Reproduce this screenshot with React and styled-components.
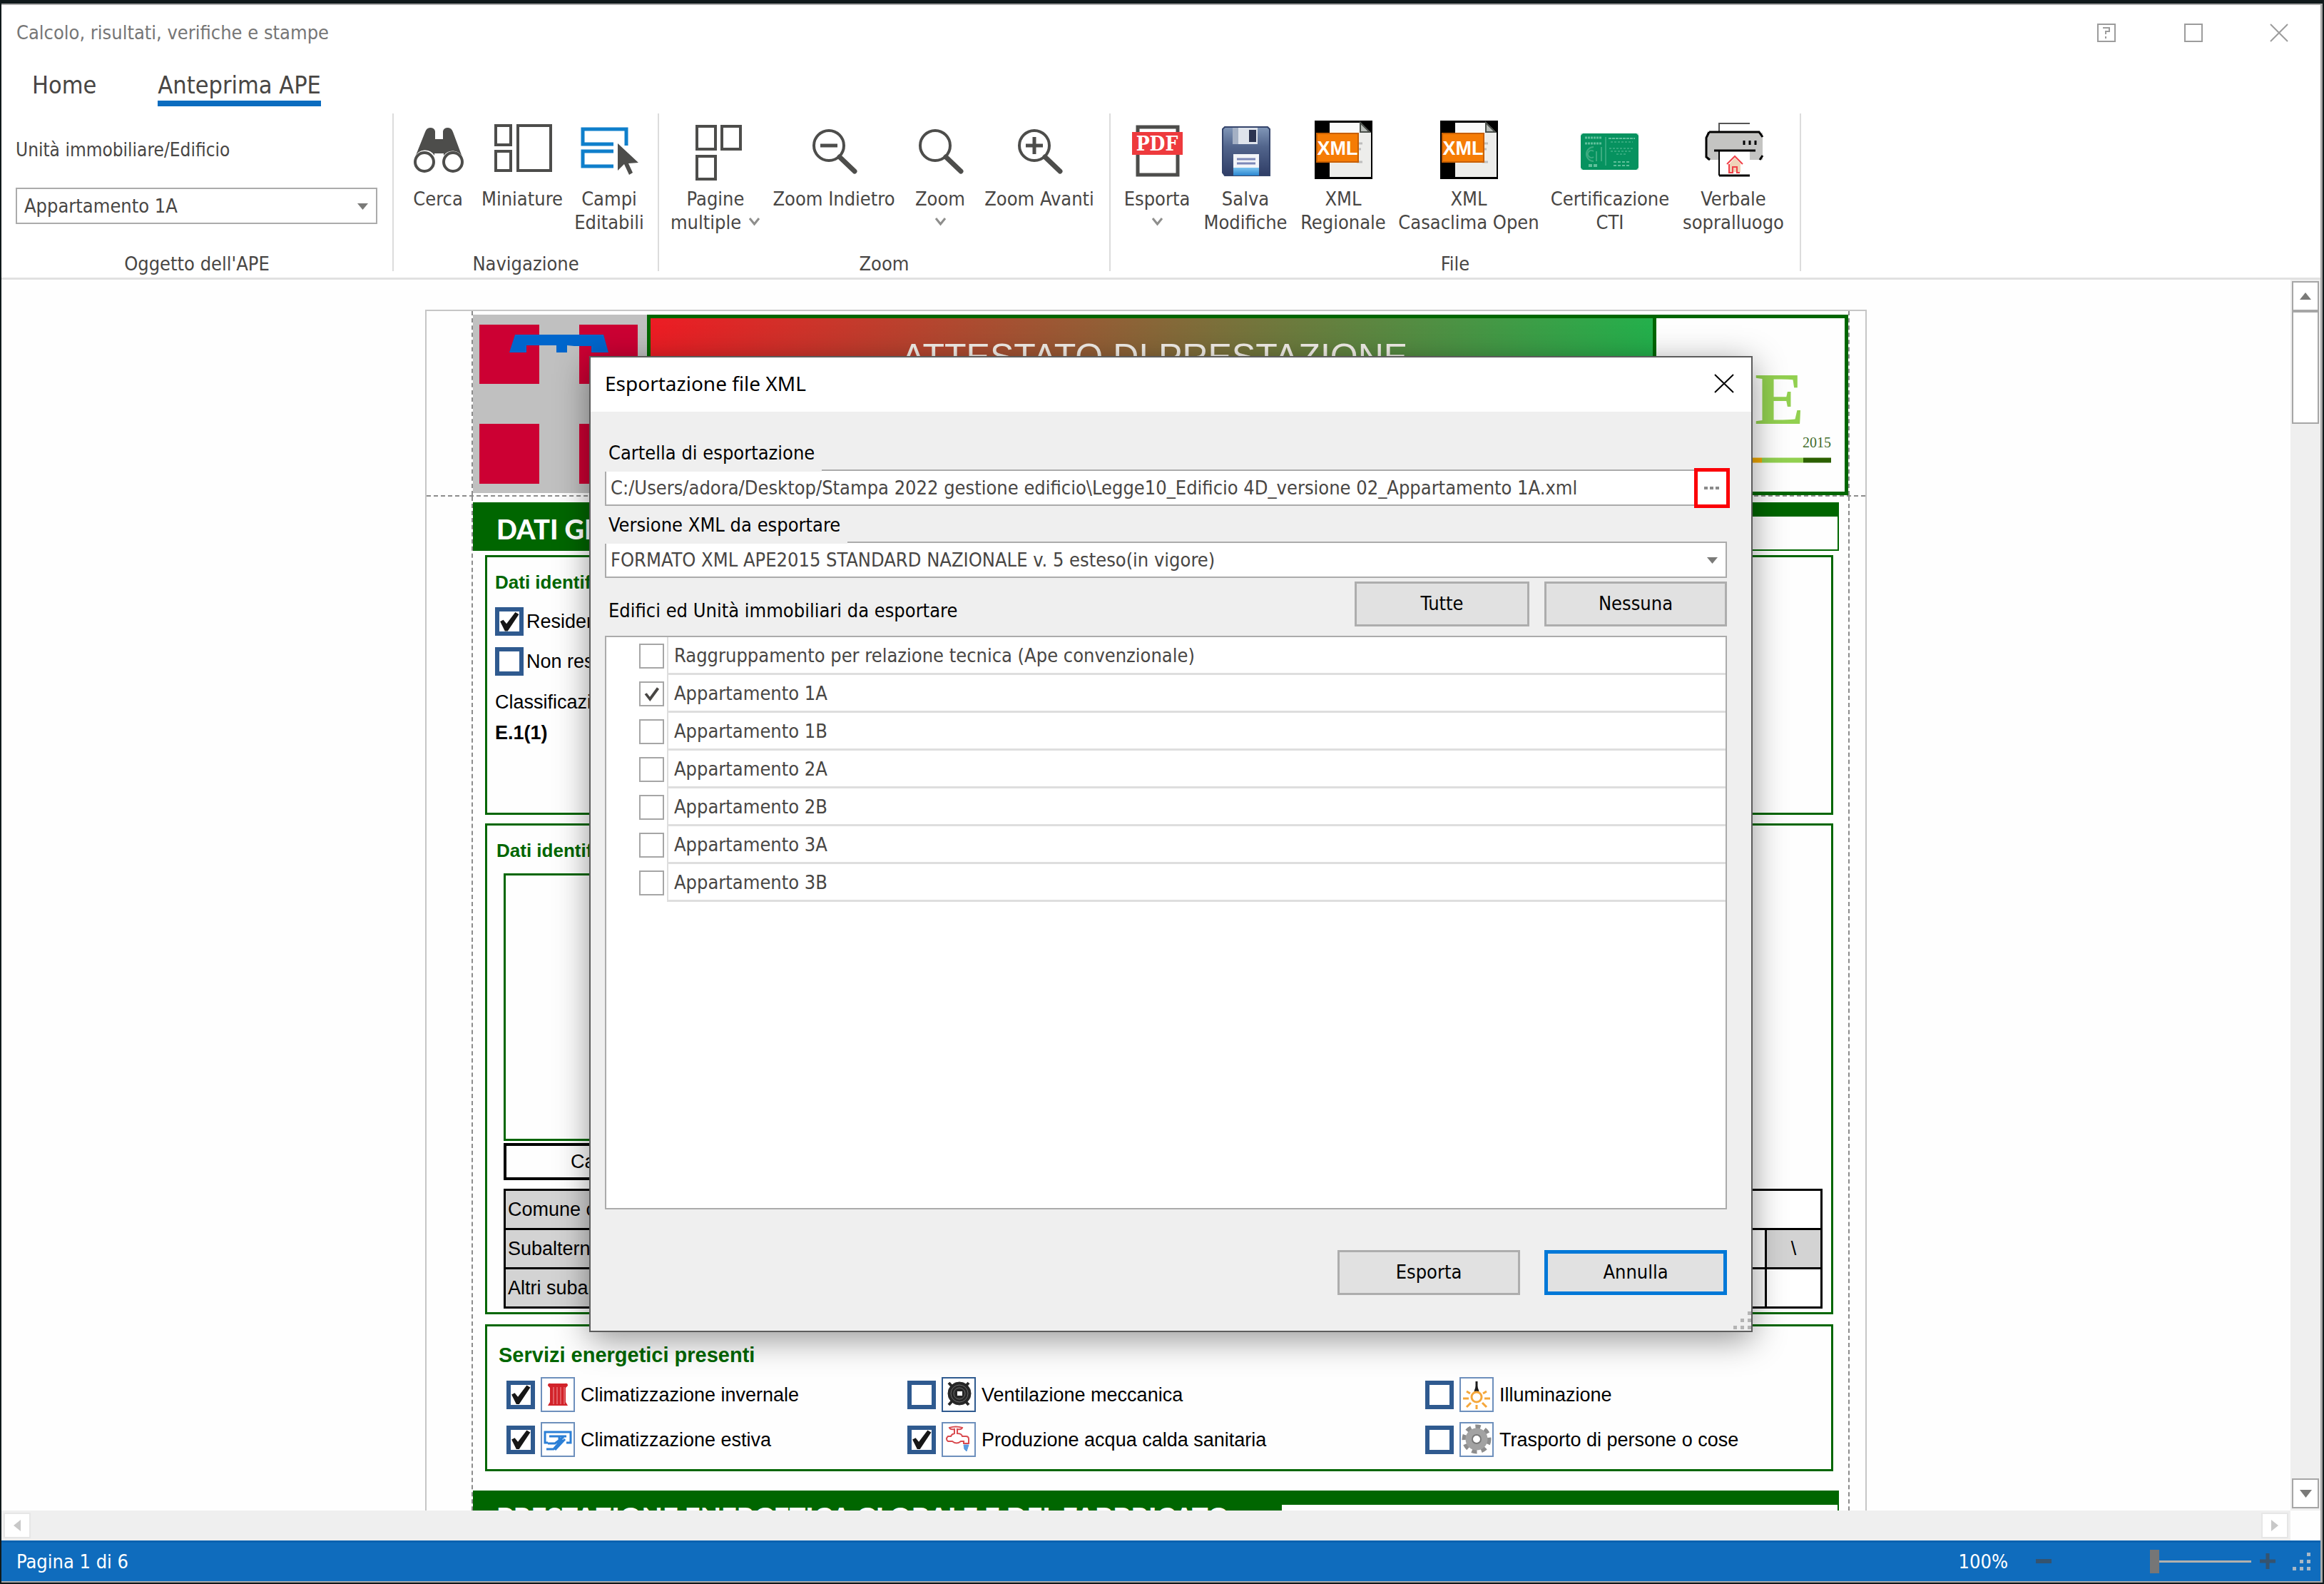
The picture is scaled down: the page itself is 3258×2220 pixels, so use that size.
import React, { useState } from "react";
import styled, { createGlobalStyle } from "styled-components";

const UI = `"DejaVu Sans Condensed", "Noto Sans", sans-serif`;
const DOC = `"Liberation Sans", Arial, sans-serif`;
const GREEN = "#006600";
const INK = "#484644";

const GlobalStyle = createGlobalStyle`
  *, *::before, *::after { box-sizing: border-box; }
  body { margin: 0; background: #fff; }
  button, input, select { font: inherit; color: inherit; margin: 0; }
`;

/* ---------- window ---------- */

const Frame = styled.div`
  position: relative;
  height: 100vh;
  display: flex;
  flex-direction: column;
  border: solid #10191b;
  border-width: 5px 2px 2px 2px;
  padding: 2px 3px 2px 0;
  background: #a9a9a9;
  font-family: ${UI};
  font-size: 27px;
  line-height: 33px;
  color: ${INK};
  overflow: hidden;
`;

const TitleBar = styled.header`
  flex: none;
  height: 77px;
  display: flex;
  align-items: center;
  justify-content: space-between;
  padding-left: 21px;
  background: #fff;
  color: #767676;
`;

const WindowButtons = styled.div`
  display: flex;
  height: 100%;
`;

const WindowButton = styled.button`
  width: 122px;
  height: 100%;
  border: 0;
  padding: 0;
  background: none;
  display: grid;
  place-items: center;
  &:last-child { width: 117px; }
`;

const Tabs = styled.nav`
  flex: none;
  height: 75px;
  display: flex;
  gap: 86px;
  padding: 15px 0 0 43px;
  background: #fff;
`;

const Tab = styled.a`
  height: 50px;
  line-height: 40px;
  font-size: 34px;
  color: ${INK};
  text-decoration: none;
  border-bottom: 8px solid ${(p) => (p.$active ? "#0b6cbf" : "transparent")};
`;

/* ---------- ribbon ---------- */

const Ribbon = styled.section`
  flex: none;
  display: flex;
  align-items: flex-start;
  height: 233px;
  background: #fff;
  border-bottom: 3px solid #e1e1e1;
`;

const Separator = styled.div`
  flex: none;
  width: 2px;
  height: 221px;
  background: #dcdcdc;
`;

const Group = styled.div`
  flex: none;
  display: grid;
  grid-template-rows: 1fr 33px;
  height: 227px;
`;

const GroupLabel = styled.div`
  text-align: center;
`;

const Tools = styled.div`
  display: grid;
  grid-template-columns: ${(p) => p.$columns};
  align-items: start;
  padding: 9px ${(p) => p.$right}px 0 ${(p) => p.$left}px;
`;

const Tool = styled.button`
  border: 0;
  padding: 0;
  background: none;
  display: flex;
  flex-direction: column;
  align-items: center;
  line-height: 33px;
  white-space: nowrap;
  svg { display: block; }
`;

const ToolLine = styled.span`
  display: flex;
  align-items: center;
  gap: 10px;
  height: 33px;
  &:first-of-type { margin-top: 4px; }
`;

const UnitPicker = styled.div`
  display: flex;
  flex-direction: column;
  padding: 35px 21px 0 20px;
`;

const SelectShell = styled.div`
  position: relative;
  svg {
    position: absolute;
    right: 13px;
    top: 50%;
    margin-top: -4px;
    pointer-events: none;
  }
`;

const Select = styled.select`
  display: block;
  width: ${(p) => p.$width || "100%"};
  height: 51px;
  padding: 0 ${(p) => p.$inset || 6}px;
  border: 2px solid #ababab;
  border-radius: 0;
  background: #fff;
  color: ${INK};
  appearance: none;
`;

const PickerLabel = styled.label`
  margin-bottom: 36px;
  font-size: 26px;
`;

/* ---------- workspace ---------- */

const Workspace = styled.main`
  flex: 1;
  min-height: 0;
  display: grid;
  grid-template-columns: 1fr 42px;
  grid-template-rows: minmax(0, 1fr) 42px;
  background: #fefefe;
`;

const Canvas = styled.div`
  overflow: hidden;
  padding-top: 42px;
`;

const VScroll = styled.div`
  display: flex;
  flex-direction: column;
  padding: 2px 2px 3px;
  background: #efefef;
`;

const HScroll = styled.div`
  display: flex;
  justify-content: space-between;
  padding: 3px 3px;
  background: #efefef;
`;

const ScrollButton = styled.button`
  width: 38px;
  height: ${(p) => (p.$dim ? 36 : 42)}px;
  padding: 0;
  display: grid;
  place-items: center;
  background: #fff;
  border: 2px solid ${(p) => (p.$dim ? "#e6e6e6" : "#a6a6a6")};
`;

const Thumb = styled.div`
  height: 158px;
  background: #fff;
  border: 2px solid #a6a6a6;
`;

const Spring = styled.div`
  flex: 1;
`;

const StatusBar = styled.footer`
  flex: none;
  height: 57px;
  display: flex;
  align-items: center;
  padding: 0 14px 2px 21px;
  background: #0f6cbd;
  border-top: 3px solid #0a62b0;
  color: #fff;
`;

const ZoomControls = styled.div`
  margin-left: auto;
  display: flex;
  align-items: center;
`;

const ZoomButton = styled.button`
  border: 0;
  padding: 0;
  width: ${(p) => p.$width}px;
  height: 40px;
  background: none;
  display: grid;
  place-items: center ${(p) => p.$justify || "center"};
`;

const ZoomRange = styled.input`
  appearance: none;
  width: 142px;
  height: 34px;
  margin: 0 12px 0 99px;
  background: linear-gradient(#b3b0ad, #b3b0ad) center / 100% 3px no-repeat;
  &::-webkit-slider-thumb {
    appearance: none;
    width: 13px;
    height: 33px;
    background: #767676;
  }
`;

/* ---------- printed page ---------- */

const Page = styled.article`
  width: 2021px;
  margin: 0 auto;
  border: 2px solid #c6c6c6;
  border-bottom: 0;
  background: #fefefe;
  font-family: ${DOC};
  line-height: 32px;
  color: #000;
`;

const PageBand = styled.div`
  padding: 0 22px 0 63px;
  border-bottom: ${(p) => (p.$rule ? "2px dashed #8c8c8c" : "0")};
`;

const Margins = styled.div`
  border: dashed #8c8c8c;
  border-width: 0 2px;
  padding-top: ${(p) => p.$top}px;
`;

const Header = styled.header`
  display: flex;
  height: 253px;
`;

const RegionLogo = styled.div`
  flex: none;
  width: 244px;
  height: 250px;
  background: #c0c0c0;
  svg { display: block; }
`;

const Banner = styled.div`
  flex: 1;
  display: flex;
  border: 5px solid ${GREEN};
`;

const BannerTitle = styled.h1`
  flex: 1;
  margin: 0;
  padding: 26px 0 0 8px;
  text-align: center;
  font-size: 50px;
  line-height: 56px;
  font-weight: 400;
  color: #f4f0ea;
  background: linear-gradient(100deg, #ed1c24, #22b14c 98%);
`;

const ApeMark = styled.div`
  width: 269px;
  border-left: 5px solid ${GREEN};
  svg { display: block; }
`;

const Bar = styled.div`
  display: flex;
  height: 68px;
  margin: ${(p) => p.$top}px 13px 0 0;
`;

const BarTitle = styled.h2`
  flex: none;
  width: ${(p) => p.$width}px;
  margin: 0;
  padding-left: 33px;
  background: ${GREEN};
  color: #fff;
  font-family: Lato, sans-serif;
  font-weight: 900;
  font-size: 38px;
  line-height: 74px;
`;

const BarRest = styled.div`
  flex: 1;
  border: solid ${GREEN};
  border-width: 20px 2px 2px 0;
`;

const Box = styled.section`
  margin: ${(p) => p.$top}px 21px 0 17px;
  height: ${(p) => p.$height}px;
  padding: ${(p) => p.$pad}px 12px 0 ${(p) => p.$left}px;
  border: 3px solid ${GREEN};
`;

const BoxTitle = styled.h3`
  margin: 0 0 ${(p) => p.$gap}px;
  font-size: ${(p) => p.$size || 26}px;
  line-height: 32px;
  color: ${GREEN};
`;

const Check = styled.input`
  appearance: none;
  flex: none;
  width: 40px;
  height: 40px;
  border: 6px solid #2f5a8f;
  background: #fff;
  &:checked::before {
    content: "";
    display: block;
    height: 28px;
    background: #161616;
    clip-path: polygon(4% 50%, 20% 42%, 36% 62%, 80% 4%, 98% 14%, 42% 98%, 28% 98%);
  }
`;

const DocChoice = styled.label`
  display: flex;
  align-items: center;
  gap: 4px;
  height: 40px;
  margin-bottom: 16px;
`;

const DocLine = styled.p`
  margin: ${(p) => p.$top}px 0 0;
  font-weight: ${(p) => (p.$bold ? 700 : 400)};
`;

const PlanBox = styled.div`
  width: 1100px;
  height: 375px;
  margin-left: 10px;
  border: 3px solid ${GREEN};
`;

const Cadastre = styled.div`
  width: 1100px;
  height: 52px;
  margin: 3px 0 12px 10px;
  padding: 6px 0 0 90px;
  border: 4px solid #000;
`;

const Parcels = styled.table`
  width: 1849px;
  margin-left: 10px;
  border-collapse: collapse;
  table-layout: fixed;
`;

const Column = styled.col`
  width: ${(p) => (p.$width ? p.$width + "px" : "auto")};
`;

const Cell = styled.td`
  height: 55px;
  padding: 0 3px;
  border: 3px solid #000;
  text-align: ${(p) => (p.$center ? "center" : "left")};
  font-weight: 400;
  background: ${(p) => (p.$shaded ? "#d3d3d3" : "#fff")};
`;

const Services = styled.div`
  display: grid;
  grid-template-columns: 562px 726px 1fr;
  row-gap: 14px;
  margin-left: 11px;
`;

const Service = styled.label`
  display: flex;
  align-items: center;
  gap: 8px;
  height: 49px;
  svg { display: block; flex: none; }
`;

/* ---------- export dialog ---------- */

const Dialog = styled.section`
  position: absolute;
  left: 824px;
  top: 494px;
  width: 1631px;
  border: 2px solid #5c5c5c;
  background: #efefef;
  color: #000;
  box-shadow: 0 10px 44px rgba(0, 0, 0, 0.42);
`;

const DialogTitle = styled.header`
  height: 76px;
  display: flex;
  align-items: center;
  justify-content: space-between;
  padding-left: 20px;
  background: #fff;
`;

const DialogHeading = styled.h2`
  margin: 0;
  padding-bottom: 3px;
  font-family: "Noto Sans", sans-serif;
  font-size: 28px;
  font-weight: 400;
`;

const CloseButton = styled.button`
  width: 76px;
  height: 76px;
  border: 0;
  padding: 0 0 4px;
  background: none;
  display: grid;
  place-items: center;
`;

const Form = styled.form`
  display: flex;
  flex-direction: column;
  padding: 41px 34px 50px 20px;
`;

const Field = styled.div`
  display: flex;
  flex-direction: column;
  margin-bottom: 10px;
`;

const FieldLabel = styled.label`
  z-index: 1;
  align-self: flex-start;
  margin-bottom: -3px;
  padding: 0 10px 10px 5px;
  background: #efefef;
`;

const PathBox = styled.div`
  position: relative;
`;

const PathInput = styled.input`
  display: block;
  width: 100%;
  height: 51px;
  padding: 0 50px 0 6px;
  border: 2px solid #ababab;
  background: #fff;
  color: ${INK};
`;

const BrowseButton = styled.button`
  position: absolute;
  right: -4px;
  top: -2px;
  width: 50px;
  height: 56px;
  padding: 0;
  border: 5px solid #fb0007;
  background: #fff;
  display: grid;
  place-items: center;
`;

const Row = styled.div`
  display: flex;
  align-items: flex-end;
  gap: ${(p) => p.$gap}px;
  margin-top: ${(p) => p.$top}px;
`;

const ListCaption = styled.span`
  margin-right: auto;
  padding: 0 0 6px 5px;
`;

const PushButton = styled.button`
  width: ${(p) => p.$width}px;
  height: 63px;
  padding: 0 0 2px;
  color: #000;
  background: #e1e1e1;
  border: ${(p) => (p.$focus ? "5px solid #0078d7" : "3px solid #adadad")};
`;

const List = styled.ul`
  list-style: none;
  height: 804px;
  margin: 13px 0 0;
  padding: 0;
  border: 2px solid #ababab;
  background: #fff;
`;

const ListItem = styled.li`
  display: flex;
  align-items: center;
  height: 53px;
  padding-left: 46px;
  color: ${INK};
`;

const ItemLabel = styled.label`
  flex: 1;
  height: 53px;
  margin-left: 4px;
  padding: 9px 0 0 8px;
  border: solid #dedede;
  border-width: 0 0 3px 2px;
`;

const ListCheck = styled.input`
  appearance: none;
  flex: none;
  width: 35px;
  height: 35px;
  border: 2px solid #a6a6a6;
  background: #fff;
  &:checked::before {
    content: "";
    display: block;
    height: 31px;
    background: #484644;
    clip-path: polygon(18% 52%, 28% 46%, 42% 64%, 74% 20%, 84% 28%, 43% 84%);
  }
`;

const Grip = styled.svg`
  position: absolute;
  right: 0;
  bottom: 2px;
`;

/* ---------- drawings ---------- */

const DARK = "#4d4d4b";

const Arrow = ({ dir = "down", w = 16, h = 10, fill = "#7a7a78" }) => {
  const d = {
    down: `M0 0H${w}L${w / 2} ${h}Z`,
    up: `M0 ${h}H${w}L${w / 2} 0Z`,
    left: `M${w} 0V${h}L0 ${h / 2}Z`,
    right: `M0 0V${h}L${w} ${h / 2}Z`,
  }[dir];
  return (
    <svg width={w} height={h} viewBox={`0 0 ${w} ${h}`} aria-hidden="true">
      <path d={d} fill={fill} />
    </svg>
  );
};

const Chevron = () => (
  <svg width="17" height="13" viewBox="0 0 17 13" aria-hidden="true">
    <path d="M2 1L8.500 9L15 1" fill="none" stroke="#8e8e8c" strokeWidth="3" />
  </svg>
);

const Dots = ({ fill }) => (
  <>
    {[[20, 0], [10, 10], [20, 10], [0, 20], [10, 20], [20, 20]].map(([x, y]) => (
      <rect key={`${x}-${y}`} x={x} y={y} width="5" height="5" fill={fill} />
    ))}
  </>
);

const Icon = ({ children }) => (
  <svg width="90" height="90" viewBox="0 0 90 90" aria-hidden="true">{children}</svg>
);

const Binoculars = () => (
  <Icon>
    <path d="M27 17q2-6 7-6q6 0 7 5V27H52V16q1-5 7-5q5 0 7 6L79 52A15 15 0 0 0 53 50V47H40V50A15 15 0 0 0 13 52Z" fill={DARK} />
    <circle cx="26" cy="59" r="13" fill="#fff" stroke={DARK} strokeWidth="4" />
    <circle cx="66" cy="59" r="13" fill="#fff" stroke={DARK} strokeWidth="4" />
  </Icon>
);

const Thumbnails = () => (
  <Icon>
    <g fill="none" stroke={DARK} strokeWidth="4">
      <rect x="8" y="8" width="21" height="27" />
      <rect x="8" y="44" width="21" height="27" />
      <rect x="39" y="8" width="46" height="63" />
    </g>
  </Icon>
);

const EditFields = () => (
  <Icon>
    <path d="M51 34H8V13H69V36M51 44H8V65H51" fill="none" stroke="#0f7fcb" strokeWidth="5" />
    <path d="M57 33V71L66 62L73 77L78 74L72 61L86 60Z" fill={DARK} />
  </Icon>
);

const Pages = () => (
  <Icon>
    <g fill="none" stroke={DARK} strokeWidth="4">
      <rect x="19" y="9" width="26" height="32" />
      <rect x="54" y="9" width="26" height="32" />
      <rect x="19" y="51" width="26" height="32" />
    </g>
  </Icon>
);

const Lens = ({ minus, plus }) => (
  <Icon>
    <circle cx="38" cy="36" r="21" fill="none" stroke={DARK} strokeWidth="4" />
    <path d="M53 52L74 72" stroke={DARK} strokeWidth="7" strokeLinecap="round" />
    {(minus || plus) && <path d="M26 36H50" stroke={DARK} strokeWidth="5" />}
    {plus && <path d="M38 24V48" stroke={DARK} strokeWidth="5" />}
  </Icon>
);

const Pdf = () => (
  <Icon>
    <rect x="18" y="10" width="56" height="67" fill="#fff" stroke={DARK} strokeWidth="5" />
    <rect x="10" y="17" width="71" height="32" fill="#ee3a3d" />
    <text x="45" y="43" textAnchor="middle" fontFamily="DejaVu Serif Condensed, serif" fontWeight="700" fontSize="28" fill="#fff">PDF</text>
  </Icon>
);

const Floppy = () => (
  <Icon>
    <defs>
      <linearGradient id="flp" x1="0" y1="0" x2="0" y2="1">
        <stop offset="0" stopColor="#8197b8" />
        <stop offset=".4" stopColor="#52658c" />
        <stop offset="1" stopColor="#2f3d66" />
      </linearGradient>
      <linearGradient id="flpTag" x1="0" y1="0" x2="0" y2="1">
        <stop offset="0" stopColor="#7cc4f0" />
        <stop offset="1" stopColor="#2a86d0" />
      </linearGradient>
    </defs>
    <path d="M16 10H76L79 13V78H16L13 74V13Z" fill="url(#flp)" stroke="#34446b" strokeWidth="2" />
    <rect x="27" y="11" width="35" height="23" fill="#dfe4ec" />
    <rect x="27" y="11" width="8" height="23" fill="#a4b0c4" />
    <rect x="50" y="14" width="10" height="17" fill="#2c3450" />
    <rect x="28" y="48" width="36" height="30" fill="#f3f5f9" />
    <path d="M33 55H59M33 61H59" stroke="#7c88b8" strokeWidth="3" />
    <rect x="28" y="67" width="36" height="11" fill="url(#flpTag)" />
  </Icon>
);

const Xml = () => (
  <Icon>
    <rect x="5" y="1" width="81" height="82" fill="#000" />
    <path d="M26 4H70L84 18V80H26Z" fill="#ededeb" />
    <path d="M26 4H68V18L26 26Z" fill="#fafafa" />
    <path d="M69 4V17H82Z" fill="#b9bdb9" stroke="#4a4f4a" strokeWidth="2" />
    <path d="M64 33H72M64 41H70M64 59H72" stroke="#bdbdbd" strokeWidth="3" />
    <rect x="8" y="19" width="58" height="40" fill="#f57c05" stroke="#c85f00" strokeWidth="2" />
    <text x="37" y="49" textAnchor="middle" fontFamily="Liberation Sans, sans-serif" fontWeight="700" fontSize="27" fill="#fff">XML</text>
  </Icon>
);

const Certificate = () => (
  <Icon>
    <rect x="4" y="19" width="81" height="51" fill="#06925f" />
    <g stroke="#5fbf9a" strokeWidth="2" fill="none">
      <path d="M10 25H34M10 33H34" strokeWidth="3" strokeDasharray="3 1" />
      <path d="M39 24V64" strokeWidth="1" />
      <path d="M22 38A10 10 0 1 0 22 58M22 44A5 5 0 1 0 22 52M26 44V58M33 38V58" stroke="#3dab80" />
      <path d="M43 26H80" strokeDasharray="4 1" />
      <path d="M46 31H77M44 40H79M46 44H76M54 48H68" strokeWidth="1" strokeDasharray="3 2" />
      <path d="M50 59H73M50 64H73" strokeDasharray="4 2" />
      <path d="M15 64H29" strokeWidth="4" strokeDasharray="5 2" />
    </g>
    <path d="M4 19h3l-3 3zM85 19h-3l3 3zM4 70h3l-3-3zM85 70h-3l3-3z" fill="#bfe5d5" />
  </Icon>
);

const Printer = () => (
  <Icon>
    <path d="M68 5H25V18" fill="none" stroke="#555" strokeWidth="2" />
    <rect x="8" y="18" width="78" height="38" fill="#c4c4c2" />
    <path d="M11 17H81L86 24M11 17L7 25V52L12 56M86 50L82 56" fill="none" stroke="#000" strokeWidth="3" />
    <path d="M60 29V35M68 29V35M76 29V35" stroke="#000" strokeWidth="3" />
    <rect x="25" y="44" width="43" height="35" fill="#fff" />
    <path d="M18 43H76" stroke="#000" strokeWidth="3" />
    <path d="M25 44V78" fill="none" stroke="#000" strokeWidth="2" />
    <path d="M25 78H68" fill="none" stroke="#000" strokeWidth="3" />
    <path d="M40 61L47 53L55 61V73H40Z" fill="#efd3b8" />
    <path d="M36 62L47 51L58 62M39 62V74H44V66H50V74H54" fill="none" stroke="#f04048" strokeWidth="2" />
  </Icon>
);

const ServiceIcon = ({ kind }) => (
  <svg width="48" height="49" viewBox="0 0 48 49" aria-hidden="true">
    <rect x="1" y="1" width="46" height="47" fill="#fff" stroke={kind === "fan" ? "#2f5a8f" : "#6d8fbc"} strokeWidth="2" />
    {kind === "heat" && (
      <>
        <path d="M10 12Q10 8 14 9H34Q38 8 38 12L35 15V35L38 40H10L13 35V15Z" fill="#d2232a" />
        <path d="M18 14V38M23 14V38M28 14V38M33 14V38" stroke="#f0979a" strokeWidth="1" />
      </>
    )}
    {kind === "cool" && (
      <g fill="none" stroke="#2b7fd6" strokeWidth="3">
        <path d="M10 29H6V14H42V29H36M12 20H36M10 30H20L32 21M8 38H18L30 24M20 39L34 24M26 20V30" />
      </g>
    )}
    {kind === "fan" && (
      <g fill="none" stroke="#262626">
        <path d="M10 8L38 39M38 8L10 39" strokeWidth="4" />
        <circle cx="25" cy="23" r="16" fill="#262626" />
        <circle cx="25" cy="23" r="12" stroke="#6a6a6a" />
        <circle cx="25" cy="23" r="8" stroke="#6a6a6a" />
        <rect x="22" y="20" width="7" height="6" fill="#fff" stroke="none" />
      </g>
    )}
    {kind === "tap" && (
      <g fill="none" stroke="#d94a4f" strokeWidth="3">
        <path d="M11 8Q20 5 29 8Q28 11 22 10V16Q28 16 29 20H34Q38 20 38 24V30H31V27H27Q21 32 15 27H9Q5 24 9 20H13Q14 17 18 16V10Q12 11 11 8Z" strokeWidth="2" />
        <path d="M31 32H38L35 41L32 38Z" stroke="#5b9be0" fill="#5b9be0" strokeWidth="1" />
      </g>
    )}
    {kind === "light" && (
      <g fill="none" stroke="#f5a73b" strokeWidth="3">
        <path d="M24 6V14" stroke="#1c1c1c" strokeWidth="3" />
        <path d="M21 20L24 11L27 20Z" fill="#1c1c1c" stroke="#1c1c1c" strokeWidth="1" />
        <circle cx="24" cy="28" r="7" />
        <path d="M24 39V45M13 30H5M35 30H43M16 36L10 42M32 36L38 42M15 23L10 20M33 23L38 20" />
      </g>
    )}
    {kind === "gear" && (
      <g fill="none" stroke="#8d8d8d">
        <circle cx="24" cy="24" r="17" strokeWidth="7" strokeDasharray="7 6" />
        <circle cx="24" cy="24" r="11" strokeWidth="9" stroke="#a2a2a2" />
        <circle cx="24" cy="24" r="6" strokeWidth="2" stroke="#777" />
      </g>
    )}
  </svg>
);

/* ---------- data ---------- */

const UNITS = ["Appartamento 1A", "Appartamento 1B", "Appartamento 2A", "Appartamento 2B", "Appartamento 3A", "Appartamento 3B"];
const EXPORTABLE = ["Raggruppamento per relazione tecnica (Ape convenzionale)", ...UNITS];

const GROUPS = [
  {
    name: "Navigazione", left: 6, right: 8, columns: "112px 124px 120px",
    tools: [
      [<Binoculars />, ["Cerca"]],
      [<Thumbnails />, ["Miniature"]],
      [<EditFields />, ["Campi", "Editabili"]],
    ],
  },
  {
    name: "Zoom", left: 4, right: 17, columns: "150px 182px 116px 162px",
    tools: [
      [<Pages />, ["Pagine", <>multiple <Chevron /></>]],
      [<Lens minus />, ["Zoom Indietro"]],
      [<Lens />, ["Zoom", <Chevron />]],
      [<Lens plus />, ["Zoom Avanti"]],
    ],
  },
  {
    name: "File", left: 11, right: 9, columns: "108px 140px 134px 218px 178px 168px",
    tools: [
      [<Pdf />, ["Esporta", <Chevron />]],
      [<Floppy />, ["Salva", "Modifiche"]],
      [<Xml />, ["XML", "Regionale"]],
      [<Xml />, ["XML", "Casaclima Open"]],
      [<Certificate />, ["Certificazione", "CTI"]],
      [<Printer />, ["Verbale", "sopralluogo"]],
    ],
  },
];

const SERVICES = [
  ["heat", "Climatizzazione invernale", true],
  ["fan", "Ventilazione meccanica", false],
  ["light", "Illuminazione", false],
  ["cool", "Climatizzazione estiva", true],
  ["tap", "Produzione acqua calda sanitaria", true],
  ["gear", "Trasporto di persone o cose", false],
];

/* ---------- parts ---------- */

const RibbonBar = () => (
  <Ribbon>
    <Group>
      <UnitPicker>
        <PickerLabel htmlFor="unit">Unità immobiliare/Edificio</PickerLabel>
        <SelectShell>
          <Select id="unit" $width="507px" $inset={10}>
            {UNITS.map((u) => <option key={u}>{u}</option>)}
          </Select>
          <Arrow w={15} h={9} />
        </SelectShell>
      </UnitPicker>
      <GroupLabel>Oggetto dell'APE</GroupLabel>
    </Group>
    <Separator />
    {GROUPS.map((g) => (
      <React.Fragment key={g.name}>
        <Group>
          <Tools $columns={g.columns} $left={g.left} $right={g.right}>
            {g.tools.map(([icon, lines], i) => (
              <Tool key={i} type="button">
                {icon}
                {lines.map((line, j) => <ToolLine key={j}>{line}</ToolLine>)}
              </Tool>
            ))}
          </Tools>
          <GroupLabel>{g.name}</GroupLabel>
        </Group>
        <Separator />
      </React.Fragment>
    ))}
  </Ribbon>
);

const Certificato = () => (
  <Page>
    <PageBand $rule>
      <Margins $top={5}>
        <Header>
          <RegionLogo>
            <svg width="244" height="248" viewBox="0 0 244 248" aria-hidden="true">
              <g fill="#cc0033">
                <rect x="9" y="14" width="84" height="83" />
                <rect x="149" y="14" width="82" height="83" />
                <rect x="9" y="153" width="84" height="84" />
                <rect x="149" y="153" width="82" height="84" />
              </g>
              <path d="M59 28H183L190 53H166V44H142L132 43V53H117V43H75V53H51Z" fill="#0066cc" />
            </svg>
          </RegionLogo>
          <Banner>
            <BannerTitle>ATTESTATO DI PRESTAZIONE</BannerTitle>
            <ApeMark>
              <svg width="264" height="243" viewBox="0 0 264 243" aria-hidden="true">
                <g fontFamily="Liberation Serif, serif" fontWeight="700" fontSize="104">
                  <text x="-8" y="148" fill="#e3000f">A</text>
                  <text x="72" y="148" fill="#e2a500">P</text>
                  <text x="138" y="148" fill="#92d050">E</text>
                </g>
                <text x="205" y="181" fontFamily="Liberation Serif, serif" fontSize="20" fill="#3f6b2a">2015</text>
                <path d="M20 199H148" stroke="#f0a800" strokeWidth="7" />
                <path d="M148 199H206" stroke="#92d050" strokeWidth="7" />
                <path d="M206 199H245" stroke="#2c6000" strokeWidth="7" />
              </svg>
            </ApeMark>
          </Banner>
        </Header>
      </Margins>
    </PageBand>
    <PageBand>
      <Margins $top={8}>
        <Bar $top={0}>
          <BarTitle $width={1000}>DATI GENERALI</BarTitle>
          <BarRest />
        </Bar>
        <Box $top={6} $height={364} $left={11} $pad={19}>
          <BoxTitle $gap={19}>Dati identificativi</BoxTitle>
          <DocChoice><Check type="checkbox" defaultChecked />Residenziale</DocChoice>
          <DocChoice><Check type="checkbox" />Non residenziale</DocChoice>
          <DocLine $top={21}>Classificazione D.P.R. 412/93</DocLine>
          <DocLine $top={11} $bold>E.1(1)</DocLine>
        </Box>
        <Box $top={12} $height={688} $left={13} $pad={19}>
          <BoxTitle $gap={16}>Dati identificativi</BoxTitle>
          <PlanBox />
          <Cadastre>Catasto</Cadastre>
          <Parcels>
            <colgroup>
              <Column $width={310} />
              <Column />
              <Column $width={300} />
              <Column $width={78} />
            </colgroup>
            <tbody>
              <tr>
                <Cell as="th" scope="row" $shaded>Comune catastale</Cell>
                <Cell colSpan={3} />
              </tr>
              <tr>
                <Cell as="th" scope="row" $shaded>Subalterni</Cell>
                <Cell />
                <Cell />
                <Cell $shaded $center>\</Cell>
              </tr>
              <tr>
                <Cell as="th" scope="row" $shaded>Altri subalterni</Cell>
                <Cell />
                <Cell />
                <Cell />
              </tr>
            </tbody>
          </Parcels>
        </Box>
        <Box $top={14} $height={206} $left={16} $pad={24}>
          <BoxTitle $gap={15} $size={29}>Servizi energetici presenti</BoxTitle>
          <Services>
            {SERVICES.map(([kind, text, on]) => (
              <Service key={kind}>
                <Check type="checkbox" defaultChecked={on} />
                <ServiceIcon kind={kind} />
                {text}
              </Service>
            ))}
          </Services>
        </Box>
        <Bar $top={27}>
          <BarTitle $width={1134}>PRESTAZIONE ENERGETICA GLOBALE E DEL FABBRICATO</BarTitle>
          <BarRest />
        </Bar>
      </Margins>
    </PageBand>
  </Page>
);

const ExportDialog = () => {
  const [checked, setChecked] = useState(["Appartamento 1A"]);
  const toggle = (name) =>
    setChecked((c) => (c.includes(name) ? c.filter((n) => n !== name) : [...c, name]));
  return (
    <Dialog role="dialog" aria-labelledby="dlg-title">
      <DialogTitle>
        <DialogHeading id="dlg-title">Esportazione file XML</DialogHeading>
        <CloseButton type="button" aria-label="Chiudi">
          <svg width="28" height="27" viewBox="0 0 28 27" aria-hidden="true">
            <path d="M1 1L27 26M27 1L1 26" stroke="#000" strokeWidth="2" />
          </svg>
        </CloseButton>
      </DialogTitle>
      <Form onSubmit={(e) => e.preventDefault()}>
        <Field>
          <FieldLabel htmlFor="path">Cartella di esportazione</FieldLabel>
          <PathBox>
            <PathInput
              id="path"
              type="text"
              defaultValue="C:/Users/adora/Desktop/Stampa 2022 gestione edificio\Legge10_Edificio 4D_versione 02_Appartamento 1A.xml"
            />
            <BrowseButton type="button" aria-label="Sfoglia">
              <svg width="22" height="4" viewBox="0 0 22 4" aria-hidden="true">
                <path d="M0 2H5M8 2H13M16 2H21" stroke="#8a8a8a" strokeWidth="4" />
              </svg>
            </BrowseButton>
          </PathBox>
        </Field>
        <Field>
          <FieldLabel htmlFor="version">Versione XML da esportare</FieldLabel>
          <SelectShell>
            <Select id="version">
              <option>FORMATO XML APE2015 STANDARD NAZIONALE v. 5 esteso(in vigore)</option>
            </Select>
            <Arrow w={15} h={9} />
          </SelectShell>
        </Field>
        <Row $gap={21} $top={-5}>
          <ListCaption>Edifici ed Unità immobiliari da esportare</ListCaption>
          <PushButton type="button" $width={245} onClick={() => setChecked(EXPORTABLE)}>Tutte</PushButton>
          <PushButton type="button" $width={256} onClick={() => setChecked([])}>Nessuna</PushButton>
        </Row>
        <List>
          {EXPORTABLE.map((name, i) => (
            <ListItem key={name}>
              <ListCheck
                id={`unit-${i}`}
                type="checkbox"
                checked={checked.includes(name)}
                onChange={() => toggle(name)}
              />
              <ItemLabel htmlFor={`unit-${i}`}>{name}</ItemLabel>
            </ListItem>
          ))}
        </List>
        <Row as="footer" $gap={34} $top={57}>
          <Spring />
          <PushButton type="submit" $width={256}>Esporta</PushButton>
          <PushButton type="button" $width={256} $focus>Annulla</PushButton>
        </Row>
      </Form>
      <Grip width="25" height="25" viewBox="0 0 25 25" aria-hidden="true"><Dots fill="#b4b4b4" /></Grip>
    </Dialog>
  );
};

export default function App() {
  return (
    <>
      <GlobalStyle />
      <Frame>
        <TitleBar>
          <span>Calcolo, risultati, verifiche e stampe</span>
          <WindowButtons>
            <WindowButton type="button" aria-label="Guida">
              <svg width="26" height="26" viewBox="0 0 26 26" fill="none" stroke="#9c9c9c" strokeWidth="2" aria-hidden="true">
                <path d="M1 1H25V25H1ZM8 6H17V11H12V15M12 18V21" />
              </svg>
            </WindowButton>
            <WindowButton type="button" aria-label="Ingrandisci">
              <svg width="26" height="26" viewBox="0 0 26 26" fill="none" stroke="#9c9c9c" strokeWidth="2" aria-hidden="true">
                <path d="M1 1H25V25H1Z" />
              </svg>
            </WindowButton>
            <WindowButton type="button" aria-label="Chiudi finestra">
              <svg width="26" height="26" viewBox="0 0 26 26" fill="none" stroke="#9c9c9c" strokeWidth="2" aria-hidden="true">
                <path d="M1 1L25 25M25 1L1 25" />
              </svg>
            </WindowButton>
          </WindowButtons>
        </TitleBar>
        <Tabs>
          <Tab href="#home">Home</Tab>
          <Tab href="#anteprima" $active>Anteprima APE</Tab>
        </Tabs>
        <RibbonBar />
        <Workspace>
          <Canvas><Certificato /></Canvas>
          <VScroll>
            <ScrollButton type="button" aria-label="Su"><Arrow dir="up" /></ScrollButton>
            <Thumb />
            <Spring />
            <ScrollButton type="button" aria-label="Giù"><Arrow w={17} h={11} /></ScrollButton>
          </VScroll>
          <HScroll>
            <ScrollButton type="button" $dim aria-label="Sinistra"><Arrow dir="left" w={10} h={16} fill="#c8c8c8" /></ScrollButton>
            <ScrollButton type="button" $dim aria-label="Destra"><Arrow dir="right" w={10} h={16} fill="#c8c8c8" /></ScrollButton>
          </HScroll>
        </Workspace>
        <StatusBar>
          <span>Pagina 1 di 6</span>
          <ZoomControls>
            <label htmlFor="zoom">100%</label>
            <ZoomButton type="button" $width={100} aria-label="Riduci">
              <svg width="22" height="6" viewBox="0 0 22 6" aria-hidden="true"><rect width="22" height="6" fill="#35536f" /></svg>
            </ZoomButton>
            <ZoomRange id="zoom" type="range" min="100" max="500" defaultValue="100" />
            <ZoomButton type="button" $width={22} aria-label="Aumenta">
              <svg width="22" height="22" viewBox="0 0 22 22" aria-hidden="true">
                <path d="M0 11H22M11 0V22" stroke="#35536f" strokeWidth="5" />
              </svg>
            </ZoomButton>
            <ZoomButton type="button" $width={49} $justify="end" aria-label="Ridimensiona">
              <svg width="25" height="25" viewBox="0 0 25 25" aria-hidden="true"><Dots fill="#a9b8c6" /></svg>
            </ZoomButton>
          </ZoomControls>
        </StatusBar>
        <ExportDialog />
      </Frame>
    </>
  );
}
